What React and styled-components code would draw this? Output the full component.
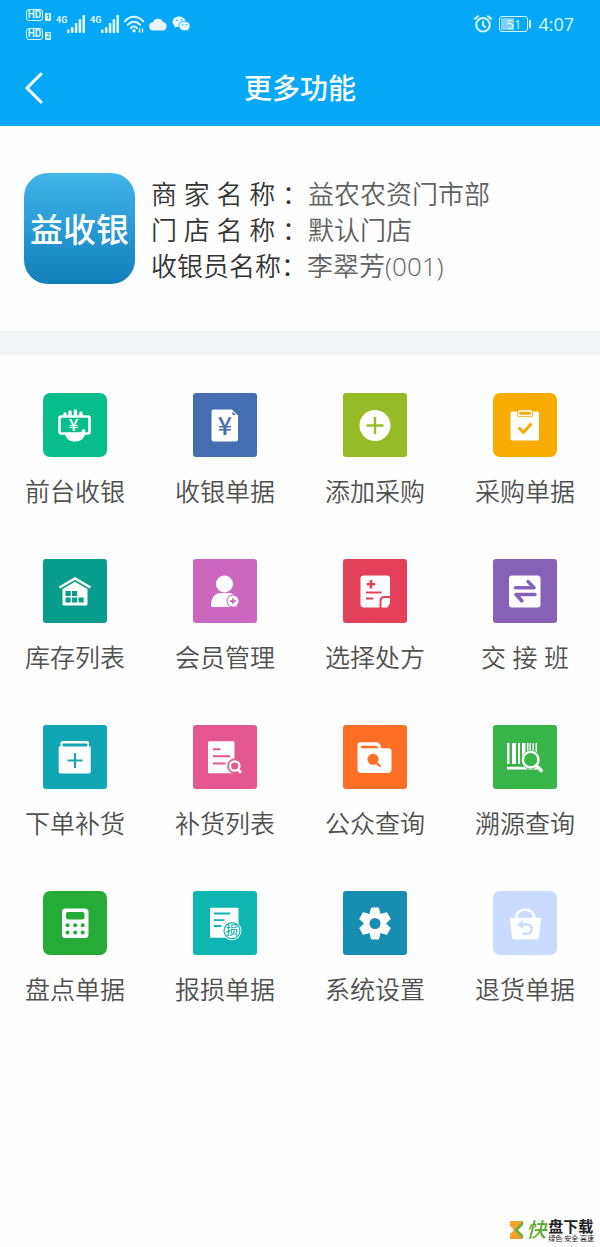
import styled, { createGlobalStyle } from "styled-components";

const GlobalStyle = createGlobalStyle`
  * {
    box-sizing: border-box;
  }
  body {
    margin: 0;
    background: #fefefe;
    font-family: "Open Sans", "Noto Sans CJK SC", sans-serif;
  }
  button {
    padding: 0;
    border: none;
    background: none;
    font-family: inherit;
    cursor: pointer;
  }
`;

const SignalIcon = () => (
  <svg width="18" height="18" viewBox="0 0 18 18" fill="currentColor" aria-hidden="true">
    <rect x="0" y="14.500" width="2.600" height="3.500" rx="1" />
    <rect x="3.900" y="12" width="2.600" height="6" rx="1" />
    <rect x="7.800" y="8" width="2.600" height="10" rx="1" />
    <rect x="11.600" y="4" width="2.600" height="14" rx="1" />
    <rect x="15.400" y="0" width="2.600" height="18" rx="1" />
  </svg>
);

const WifiIcon = () => (
  <svg width="20" height="18" viewBox="0 0 20 18" fill="none" stroke="currentColor" strokeWidth="2" strokeLinecap="round" aria-hidden="true">
    <path d="M1 6.200C6 .2 14 .2 19 6.200M4 9.700c3.400-4 8.600-4 12 0M7 13c1.700-2 4.300-2 6 0" />
    <circle cx="10" cy="15.800" r="1.700" fill="currentColor" stroke="none" />
    <path d="M15.500 17v-3M18.500 14v3" strokeWidth="1.500" />
  </svg>
);

const CloudIcon = () => (
  <svg width="18" height="14" viewBox="0 0 18 14" fill="#eef3fb" aria-hidden="true">
    <path d="M4.500 13.500a4 4 0 0 1-.7-8A5.500 5.500 0 0 1 14 5a4.300 4.300 0 0 1-.3 8.500z" />
  </svg>
);

const ChatIcon = () => (
  <svg width="19" height="16" viewBox="0 0 19 16" fill="#e6f7ff" aria-hidden="true">
    <path d="M7 .5C3.300.5.5 2.800.5 5.800c0 1.700.9 3.100 2.300 4.100l-.6 2 2.300-1.200c.8.2 1.600.3 2.500.3 3.700 0 6.500-2.300 6.500-5.200S10.700.5 7 .5z" />
    <path d="M12.500 5.300c-3.300 0-5.700 2.100-5.700 4.700s2.400 4.700 5.700 4.700c.7 0 1.400-.1 2-.3l2 1.100-.5-1.800c1.400-.9 2.200-2.200 2.200-3.700 0-2.600-2.400-4.700-5.700-4.700z" stroke="#04a8f7" strokeWidth=".8" />
    <g fill="#04a8f7">
      <circle cx="5" cy="4.200" r=".8" />
      <circle cx="9.200" cy="4" r=".8" />
      <circle cx="10.700" cy="8.700" r=".7" />
      <circle cx="14.200" cy="8.700" r=".7" />
    </g>
  </svg>
);

const AlarmIcon = () => (
  <svg width="18" height="18" viewBox="0 0 18 18" fill="none" stroke="currentColor" strokeWidth="2" strokeLinecap="round" aria-hidden="true">
    <circle cx="9" cy="9.800" r="6.800" />
    <path d="M9 6.500V10l2 2M1 3.800 4 1.200M17 3.800l-3-2.600" />
  </svg>
);

const BackIcon = () => (
  <svg width="20" height="32" viewBox="0 0 20 32" fill="none" stroke="currentColor" strokeWidth="3" strokeLinecap="round" strokeLinejoin="round" aria-hidden="true">
    <path d="M17 2 3 16l14 14" />
  </svg>
);

// Every glyph is drawn white on a 64x64 tile, "c" is the tile colour for the cut-outs
const glyphs = {
  cashier: (c) => (
    <>
      <path d="M22 41h20c-1 5-5 7.500-10 7.500S23 46 22 41z" />
      <path d="M22 24v-3M27 24v-5M32.500 24v-6M38 24v-4" stroke="#fff" strokeWidth="3.400" strokeLinecap="round" />
      <rect x="16.500" y="23.500" width="30" height="17" rx="1.500" fill={c} stroke="#fff" strokeWidth="2.600" />
      <YenText x="30.500" y="38" fontSize="17" fontWeight="500">¥</YenText>
      <path d="M36 41c0-2 1-2 2.500-2 0-2 1-3 2-3s2 1 2 3v2z" />
    </>
  ),
  receipt: (c) => (
    <>
      <path d="M20.500 16.500H39l6 6v24a2 2 0 0 1-2 2H20.500a2 2 0 0 1-2-2v-28a2 2 0 0 1 2-2z" />
      <path d="M39.500 18.500v3.500H43z" fill={c} />
      <YenText x="32" y="41.500" fontSize="25" fontWeight="500" fill={c}>¥</YenText>
    </>
  ),
  add: (c) => (
    <>
      <circle cx="32" cy="32.500" r="15.500" />
      <path d="M32 24v17M23.500 32.500h17" stroke={c} strokeWidth="2.400" />
    </>
  ),
  clipboard: (c) => (
    <>
      <rect x="17.500" y="18.500" width="28.500" height="29" rx="2" />
      <rect x="25.500" y="18" width="13" height="4.500" rx="1" stroke={c} strokeWidth="3" />
      <rect x="25.500" y="18" width="13" height="4.500" rx="1" fill={c} stroke="#fff" strokeWidth="1.500" />
      <path d="m25.500 34.500 5 4.800 8-8.800" fill="none" stroke={c} strokeWidth="3" />
    </>
  ),
  house: (c) => (
    <>
      <path d="m16.500 28.500 15.500-9 15.500 9" fill="none" stroke="#fff" strokeWidth="2.600" />
      <path d="m19.500 30 12.500-7.200L44.500 30v15a1.500 1.500 0 0 1-1.500 1.500H21a1.500 1.500 0 0 1-1.500-1.500z" />
      <path d="M22.500 32h5.200v5h-5.200zM29 32h5.200v5H29zM22.500 38.500h5.200v5h-5.200zM29 38.500h5.200v5H29zM35.500 38.500h5.200v5h-5.200z" fill={c} />
    </>
  ),
  member: (c) => (
    <>
      <circle cx="31.500" cy="25" r="8.500" />
      <path d="M18 46c0-7 4-12 9-12h9c4 0 7 3 8 7v7H20a2 2 0 0 1-2-2z" />
      <circle cx="40" cy="42" r="6.500" fill={c} />
      <circle cx="40" cy="42" r="5.500" />
      <path d="M40 39.200v5.600M37.200 42h5.600" stroke={c} strokeWidth="1.800" />
    </>
  ),
  prescription: (c) => (
    <>
      <rect x="17.500" y="16.500" width="29.500" height="32" rx="3" />
      <path d="M28 21v8.500M23.800 25.200h8.500" stroke={c} strokeWidth="2.600" />
      <path d="M23 33.500h15.500M23 39.500h7.500M37.500 49v-7c0-3 1-4 4-4H48" fill="none" stroke={c} strokeWidth="2" />
      <path d="M44 48.500h3.500V44z" fill={c} />
    </>
  ),
  shift: (c) => (
    <>
      <rect x="16" y="16.500" width="31.500" height="32" rx="3" />
      <path d="M22.500 28.700H41L35 22.500M42 35.500H23l6 6.500" fill="none" stroke={c} strokeWidth="3.400" strokeLinecap="round" strokeLinejoin="round" />
    </>
  ),
  restock: (c) => (
    <>
      <rect x="17.500" y="16" width="28.500" height="10" rx="2" />
      <rect x="15.700" y="21" width="32" height="27.500" rx="2" />
      <rect x="19.500" y="18.500" width="25" height="3" rx="1" fill={c} />
      <path d="M32 28v15M24.500 35.500h15" stroke={c} strokeWidth="2.200" />
    </>
  ),
  list: (c) => (
    <>
      <rect x="15" y="16.300" width="26.500" height="32" rx="1.500" />
      <path d="M20 24.300h7.500M20 31.300h17M20 38.500h12.500" stroke={c} strokeWidth="2" />
      <circle cx="41.700" cy="41" r="7.500" fill={c} />
      <circle cx="41.700" cy="41" r="4.700" fill={c} stroke="#fff" strokeWidth="2.300" />
      <path d="m45 44.500 3 3.200" stroke="#fff" strokeWidth="2.800" />
    </>
  ),
  folder: (c) => (
    <>
      <path d="M17.500 17.300H34c2 0 4 2.500 4 6h7.500a3 3 0 0 1 3 3V44a4 4 0 0 1-4 4h-26a4 4 0 0 1-4-4V20.300a3 3 0 0 1 3-3z" />
      <path d="M19 20.800h13.500c1.500 0 2.500 1 3 2.500H19a1.200 1.200 0 0 1 0-2.500z" fill={c} />
      <circle cx="30" cy="34.300" r="5.500" fill={c} />
      <path d="m33 37.500 4.500 4" stroke={c} strokeWidth="2.200" />
    </>
  ),
  barcode: (c) => (
    <>
      <path d="M14 18h2.500v21H14zM19 18h4v21h-4zM25 18h2v21h-2zM29 18h3.500v21H29zM34 18h1.500v9H34zM36.500 18h1.500v9h-1.500zM39.500 18h1.500v9h-1.500zM42.500 18h1.500v9h-1.500zM14 41.800h30v2.600H14z" />
      <circle cx="37.700" cy="34.700" r="9.500" fill={c} />
      <circle cx="37.700" cy="34.700" r="7.800" fill={c} stroke="#fff" strokeWidth="2.400" />
      <path d="m43.500 41 4.700 4.500" stroke="#fff" strokeWidth="3.600" strokeLinecap="round" />
    </>
  ),
  calculator: (c) => (
    <>
      <rect x="19" y="17.500" width="26.500" height="29.500" rx="3.500" />
      <rect x="23" y="21" width="18.500" height="7.500" rx="2" fill={c} />
      <g fill={c}>
        <circle cx="24.500" cy="34.300" r="2" />
        <circle cx="32.200" cy="34.300" r="2" />
        <circle cx="39.700" cy="34.300" r="2" />
        <circle cx="24.500" cy="41.500" r="2" />
        <circle cx="32.200" cy="41.500" r="2" />
        <circle cx="39.700" cy="41.500" r="2" />
      </g>
    </>
  ),
  damage: (c) => (
    <>
      <rect x="17" y="16.700" width="28.500" height="30" rx="1" />
      <path d="M21 22.500h16M21 29.200h10.500M21 35h7.500" stroke={c} strokeWidth="1.800" />
      <circle cx="39" cy="39.700" r="9.500" />
      <circle cx="39" cy="39.700" r="8" stroke={c} strokeWidth="1.200" />
      <text x="39" y="44" fontSize="12" fontWeight="500" textAnchor="middle" fill={c}>损</text>
    </>
  ),
  settings: (c) => (
    <>
      {[0, 60, 120].map((deg) => (
        <path
          key={deg}
          d="M28.500 17h7l1.500 6v19l-1.500 6h-7L27 42V23z"
          transform={`rotate(${deg} 32 32.500)`}
          stroke="#fff"
          strokeWidth="1"
          strokeLinejoin="round"
        />
      ))}
      <circle cx="32" cy="32.500" r="11" />
      <circle cx="32" cy="32.500" r="5.500" fill={c} />
    </>
  ),
  refund: (c) => (
    <>
      <path d="M23 29c-1-14 19-14 18.500 0" fill="none" stroke="#fff" strokeWidth="2.400" />
      <path d="M18.500 26.700h28a1.500 1.500 0 0 1 1.500 1.700l-2 17.600a3 3 0 0 1-3 2.500H22a3 3 0 0 1-3-2.500l-2-17.600a1.500 1.500 0 0 1 1.500-1.700z" />
      <path d="M28 33.500h6.500c5.500 0 5.500 9.300 0 9.300h-5" fill="none" stroke={c} strokeWidth="2.500" />
      <path d="m24 33.500 6-4.500v9z" fill={c} />
    </>
  ),
};

const menu = [
  { label: "前台收银", icon: "cashier", color: "#07bd8a", rounded: true },
  { label: "收银单据", icon: "receipt", color: "#456db1" },
  { label: "添加采购", icon: "add", color: "#97bb27" },
  { label: "采购单据", icon: "clipboard", color: "#f8ac00", rounded: true },
  { label: "库存列表", icon: "house", color: "#089c8d" },
  { label: "会员管理", icon: "member", color: "#cb67bf" },
  { label: "选择处方", icon: "prescription", color: "#e34059" },
  { label: "交 接 班", icon: "shift", color: "#8761b5" },
  { label: "下单补货", icon: "restock", color: "#12a5b4" },
  { label: "补货列表", icon: "list", color: "#e7578f" },
  { label: "公众查询", icon: "folder", color: "#fd6e27" },
  { label: "溯源查询", icon: "barcode", color: "#37b549" },
  { label: "盘点单据", icon: "calculator", color: "#25ac36", rounded: true },
  { label: "报损单据", icon: "damage", color: "#0db5b3" },
  { label: "系统设置", icon: "settings", color: "#178db2" },
  { label: "退货单据", icon: "refund", color: "#c9dbff", rounded: true },
];

const shopInfo = [
  { name: "商 家 名 称 ：", value: "益农农资门市部" },
  { name: "门 店 名 称 ：", value: "默认门店" },
  { name: "收银员名称：", value: "李翠芳(001)" },
];

const App = () => {
  return (
    <>
      <GlobalStyle />
      <Page>
        <Header>
          <StatusBar>
            <StatusGroup>
              <HdColumn>
                {[1, 2].map((sim) => (
                  <HdRow key={sim}>
                    <HdBadge>HD</HdBadge>
                    <SimBadge>{sim}</SimBadge>
                  </HdRow>
                ))}
              </HdColumn>
              <Signal>
                <Network>4G</Network>
                <SignalIcon />
              </Signal>
              <Signal>
                <Network>4G</Network>
                <SignalIcon />
              </Signal>
              <WifiIcon />
              <CloudIcon />
              <ChatIcon />
            </StatusGroup>
            <StatusGroup $end>
              <AlarmIcon />
              <Battery>
                <Charge>51</Charge>
              </Battery>
              <Time>4:07</Time>
            </StatusGroup>
          </StatusBar>
          <TitleBar>
            <BackButton aria-label="返回">
              <BackIcon />
            </BackButton>
            <Title>更多功能</Title>
          </TitleBar>
        </Header>

        <Profile>
          <AppLogo>益收银</AppLogo>
          <InfoList>
            {shopInfo.map((info) => (
              <InfoRow key={info.name}>
                <dt>{info.name}</dt>
                <dd>{info.value}</dd>
              </InfoRow>
            ))}
          </InfoList>
        </Profile>

        <MenuGrid>
          {menu.map(({ label, icon, color, rounded }) => (
            <MenuItem key={label}>
              <Tile $color={color} $rounded={rounded}>
                <svg width="64" height="64" viewBox="0 0 64 64" fill="#fff" aria-hidden="true">
                  {glyphs[icon](color)}
                </svg>
              </Tile>
              <MenuLabel>{label}</MenuLabel>
            </MenuItem>
          ))}
        </MenuGrid>

        <Footer>
          <svg width="14" height="18" viewBox="0 0 14 18" aria-hidden="true">
            <path d="M0 0h13L5 9l8 9H0z" fill="#f6a12c" />
            <path d="M13 0v4L8 9l5 5v4L4 9z" fill="#6fae2e" />
            <path d="M0 5l4 4-4 4z" fill="#fff" />
          </svg>
          <BrandMark>快</BrandMark>
          <BrandText>
            <BrandName>盘下载</BrandName>
            <Slogan>绿色·安全·高速</Slogan>
          </BrandText>
        </Footer>
      </Page>
    </>
  );
};

export default App;

const YenText = styled.text`
  font-family: "Noto Sans CJK SC", sans-serif;
  text-anchor: middle;
`;

const Page = styled.main`
  min-height: 100vh;
  display: flex;
  flex-direction: column;
`;

const Header = styled.header`
  background: #04a8f7;
  color: #fff;
`;

const StatusBar = styled.div`
  height: 48px;
  display: flex;
  justify-content: space-between;
  align-items: center;
  padding: 0 26px;
  color: #dff6fb;
`;

const StatusGroup = styled.div`
  display: flex;
  align-items: center;
  gap: ${({ $end }) => ($end ? "7px" : "5px")};
`;

const HdColumn = styled.div`
  display: flex;
  flex-direction: column;
  gap: 7px;
`;

const HdRow = styled.div`
  display: flex;
  align-items: flex-end;
  gap: 2px;
`;

const HdBadge = styled.span`
  width: 17px;
  height: 12px;
  border: 1px solid currentColor;
  border-radius: 3px;
  font-family: Roboto, sans-serif;
  font-size: 10px;
  font-weight: 700;
  line-height: 10px;
  text-align: center;
`;

const SimBadge = styled.span`
  width: 6px;
  height: 8px;
  border-radius: 1px;
  background: #dff6fb;
  color: #04a8f7;
  font-size: 7px;
  font-weight: 700;
  line-height: 8px;
  text-align: center;
`;

const Signal = styled.div`
  display: flex;
  align-items: flex-start;
`;

const Network = styled.span`
  width: 11px;
  font-family: Roboto, sans-serif;
  font-size: 9px;
  font-weight: 700;
  line-height: 10px;
`;

const Battery = styled.div`
  width: 29px;
  height: 16px;
  margin-right: 3px;
  padding: 1px;
  display: flex;
  position: relative;
  border: 1px solid currentColor;
  border-radius: 3px;
  background: linear-gradient(90deg, #7fd0f5 52%, transparent 52%) content-box;

  &::after {
    content: "";
    position: absolute;
    top: 3px;
    right: -4px;
    width: 2px;
    height: 8px;
    background: currentColor;
  }
`;

const Charge = styled.span`
  flex: 1;
  font-size: 13px;
  line-height: 12px;
  text-align: center;
`;

const Time = styled.span`
  font-size: 18px;
  font-weight: 400;
  line-height: 24px;
`;

const TitleBar = styled.div`
  height: 78px;
  display: grid;
  grid-template-columns: 1fr auto 1fr;
  align-items: center;
  padding: 2px 24px 0;
`;

const BackButton = styled.button`
  justify-self: start;
  display: flex;
  color: #fff;
`;

const Title = styled.h1`
  margin: 0;
  font-size: 28px;
  font-weight: 500;
  line-height: 40px;
`;

const Profile = styled.section`
  display: flex;
  align-items: center;
  gap: 16px;
  padding: 47px 24px;
  border-bottom: 24px solid #f2f4f6;
`;

const AppLogo = styled.div`
  width: 111px;
  height: 111px;
  flex-shrink: 0;
  padding-top: 2px;
  border-radius: 24px;
  background: linear-gradient(#41b4ea, #117fba);
  color: #fff;
  font-size: 33px;
  font-weight: 500;
  line-height: 109px;
  text-align: center;
`;

const InfoList = styled.dl`
  margin: 0;
  padding-top: 2px;
  font-size: 26px;
  font-weight: 350;
  line-height: 36px;
`;

const InfoRow = styled.div`
  display: flex;

  dt {
    color: #333;
  }
  dd {
    margin: 0;
    color: #606060;
  }
`;

const MenuGrid = styled.nav`
  display: grid;
  grid-template-columns: repeat(4, 1fr);
  row-gap: 50px;
  padding-top: 38px;
`;

const MenuItem = styled.button`
  display: flex;
  flex-direction: column;
  align-items: center;
  gap: 16px;
`;

const Tile = styled.span`
  display: flex;
  overflow: hidden;
  border-radius: ${({ $rounded }) => ($rounded ? "7px" : "3px")};
  background: ${({ $color }) => $color};
`;

const MenuLabel = styled.span`
  color: #505050;
  font-size: 25px;
  font-weight: 350;
  line-height: 36px;
`;

const Footer = styled.footer`
  display: flex;
  justify-content: flex-end;
  align-items: center;
  gap: 2px;
  margin-top: auto;
  padding: 0 6px 4px;
`;

const BrandMark = styled.span`
  color: #5fa82d;
  font-size: 20px;
  font-style: italic;
  font-weight: 500;
  line-height: 24px;
`;

const BrandText = styled.div`
  display: flex;
  flex-direction: column;
  color: #222;
`;

const BrandName = styled.strong`
  font-size: 15px;
  line-height: 18px;
`;

const Slogan = styled.small`
  font-size: 7px;
  line-height: 8px;
`;
